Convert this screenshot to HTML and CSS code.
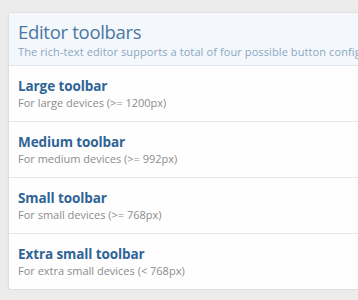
FILE: index.html
```html
<!DOCTYPE html>
<html>
<head>
<meta charset="utf-8">
<link rel="stylesheet" href="styles.css">
</head>
<body>
<div class="block">
  <div class="block-header">
    <h2 class="title">Editor toolbars</h2>
    <div class="desc">The rich-text editor supports a total of four possible button configurations.</div>
  </div>
  <ul class="list">
    <li class="row"><a class="row-title">Large toolbar</a><div class="row-hint">For large devices (&gt;= 1200px)</div></li>
    <li class="row"><a class="row-title">Medium toolbar</a><div class="row-hint">For medium devices (&gt;= 992px)</div></li>
    <li class="row"><a class="row-title">Small toolbar</a><div class="row-hint">For small devices (&gt;= 768px)</div></li>
    <li class="row"><a class="row-title">Extra small toolbar</a><div class="row-hint">For extra small devices (&lt; 768px)</div></li>
  </ul>
</div>
</body>
</html>
```
FILE: styles.css
```css
html, body {
  margin: 0;
  padding: 0;
  background: #ececec;
  font-family: "Open Sans", "Noto Sans", sans-serif;
  overflow: hidden;
}
body {
  padding: 12px 0 0 8px;
}
.block {
  width: 420px;
  background: #fefefe;
  border: 1px solid #dfdfdf;
  border-radius: 3px;
  box-shadow: 0 1px 2px rgba(0,0,0,0.08);
  overflow: hidden;
}
.block-header {
  background: #f4f8fc;
  border-bottom: 1px solid #dfe6ee;
  padding: 6px 9px 5px;
}
.title {
  margin: 0;
  font-weight: 400;
  font-size: 18.5px;
  line-height: 25px;
  color: #4a77a3;
  letter-spacing: -0.3px;
}
.desc {
  font-size: 11px;
  line-height: 16px;
  color: #8aa6c1;
  white-space: nowrap;
  letter-spacing: 0.1px;
}
.list {
  list-style: none;
  margin: 0;
  padding: 0;
}
.row {
  padding: 12px 9px 10px;
  border-top: 1px solid #e7e7e7;
  height: 33px;
}
.row:first-child { border-top: none; }
.row-title {
  display: block;
  font-weight: 700;
  font-size: 13.5px;
  line-height: 17px;
  color: #2e6496;
  letter-spacing: -0.1px;
}
.row-hint {
  font-size: 11px;
  line-height: 16px;
  color: #8c8c8c;
}
```
